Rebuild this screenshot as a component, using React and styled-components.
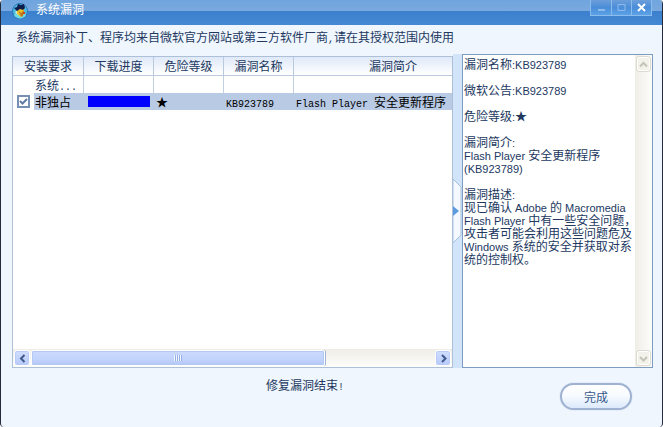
import React, { Component } from 'react';
import styled, { createGlobalStyle } from 'styled-components';

const GlobalStyle = createGlobalStyle`
  * {
    box-sizing: border-box;
  }
  body {
    margin: 0;
    background: #f7fbfe;
    color: #22385f;
    font: 12px/14px "Noto Sans CJK SC", sans-serif;
  }
  button {
    padding: 0;
    font: inherit;
  }
`;

const Window = styled.div`
  display: flex;
  flex-direction: column;
  min-height: 100vh;
  border: solid #232b3d;
  border-width: 0 1px;
  border-radius: 4px;
  background: #eff6fe;
  overflow: hidden;
`;
const TitleBar = styled.header`
  display: flex;
  height: 25px;
  padding: 0 10px;
  background: linear-gradient(#6fa5de 0, #7aa9de 11px, #3b80cd 11px, #4588d4 100%);
`;
const Title = styled.h1`
  flex: auto;
  margin: 0;
  padding: 2px 7px;
  color: white;
  font-size: 12px;
  font-weight: normal;
`;
const WindowButtons = styled.div`
  display: flex;
  height: 16px;
  border: 1px solid #8cbcec;
  border-top: 0;
`;
const WindowButton = styled.button`
  display: flex;
  width: 20px;
  align-items: center;
  justify-content: center;
  border: 0;
  border-left: 1px solid #8cbcec;
  background: linear-gradient(#6c9fdb, #4a8dd8 50%, #5ba2e7);
  color: ${props => (props.$dim ? '#8dbceb' : '#ffffff')};

  &:first-child {
    border-left: 0;
  }
`;
const Intro = styled.p`
  margin: 0;
  padding: 5px 15px 10px;
`;
// smaller western text must not make the chinese lines taller
const Mono = styled.span`
  font-family: "Liberation Mono", monospace;
  font-size: 10px;
  line-height: 0;
`;
const Latin = styled.span`
  font-family: "Liberation Sans", sans-serif;
  font-size: 11px;
  line-height: 0;
`;
const Panels = styled.main`
  display: grid;
  flex: auto;
  grid-template-columns: minmax(0, 1fr) 9px 191px;
  padding: 0 9px 0 11px;
`;
const ListPanel = styled.section`
  display: flex;
  flex-direction: column;
  margin-top: 2px;
  border: 1px solid #aebfd8;
  background: white;
`;
const ListBody = styled.div`
  flex: auto;
  overflow: hidden;
`;
const Table = styled.table`
  width: 480px;
  table-layout: fixed;
  border-collapse: separate;
  border-spacing: 0;
`;
const Col = styled.col`
  width: ${props => props.$width}px;
`;
const Th = styled.th`
  height: 19px;
  padding: 0;
  border: solid #b9c9de;
  border-width: 0 1px 1px 0;
  background: linear-gradient(#dfe9f8, #ffffff);
  font-weight: normal;
`;
const Td = styled.td`
  height: 17px;
  padding: 0 0 0 ${props => props.$indent}px;
  border-right: 1px solid ${props => (props.$selected ? '#b8cae4' : '#c3d0e2')};
  background: ${props => (props.$selected ? '#b8cae4' : '#ffffff')};
  color: ${props => (props.$selected ? '#000000' : '#22385f')};
  line-height: 17px;
  white-space: nowrap;
`;
const CheckLabel = styled.label`
  display: flex;
  align-items: center;
  height: 17px;
`;
const CheckBox = styled.span`
  display: grid;
  width: 21px;
  height: 17px;
  margin-right: 1px;
  place-items: center;
  background: white;

  > * {
    grid-area: 1 / 1;
  }
  svg {
    pointer-events: none;
    visibility: hidden;
  }
  input:checked + svg {
    visibility: visible;
  }
`;
const CheckInput = styled.input`
  appearance: none;
  width: 13px;
  height: 13px;
  margin: 0;
  border: 2px solid #7690b4;
  background: white;
`;
const Progress = styled.div`
  height: 11px;
  margin-right: 3px;
`;
const ProgressFill = styled.div`
  height: 100%;
  background: #0000ff;
`;
const HScroll = styled.div`
  display: flex;
  height: 18px;
  padding: 1px;
  background: linear-gradient(#efede6, #fdfdfa);
`;
const VScroll = styled.div`
  display: flex;
  width: 17px;
  flex-direction: column;
  justify-content: space-between;
  padding: 1px;
  background: linear-gradient(90deg, #efede6, #fdfdfa);
`;
const ScrollButton = styled.button`
  display: flex;
  width: ${props => (props.$dim ? 15 : 16)}px;
  height: 16px;
  align-items: center;
  justify-content: center;
  border: 1px solid ${props => (props.$dim ? '#dddbd0' : '#ffffff')};
  border-radius: 3px;
  background: ${props => (props.$dim ? '#f3f2ea' : 'linear-gradient(#d0defd, #b7cafa)')};
  box-shadow: inset 0 0 0 1px ${props => (props.$dim ? '#ffffff' : '#b8cbf6')};
  color: ${props => (props.$dim ? '#c5c3b8' : '#40598c')};
`;
const ThumbTrack = styled.div`
  flex: auto;
  padding: 0 1px;
`;
const Thumb = styled.div`
  display: flex;
  width: 73%;
  height: 16px;
  align-items: center;
  justify-content: center;
  border: 1px solid white;
  border-radius: 2px;
  background: linear-gradient(#cbdafd, #c2d3fc 60%, #b3c6f5);
  box-shadow: inset 0 0 0 1px #b3c8f2, 1px 0 0 #9eb4d9;
`;
const Splitter = styled.div`
  display: flex;
  align-items: center;
  background: #d1e4f9;
`;
const SplitterButton = styled.button`
  display: flex;
  width: 9px;
  height: 64px;
  border: 0;
  background: none;
`;
const DetailPanel = styled.section`
  display: flex;
  border: 1px solid #7e9cbf;
  background: white;
`;
const DetailText = styled.div`
  flex: 1;
  min-width: 0;
  padding: 2px 0 0 1px;
  line-height: 13px;
`;
// the blank half of a closing comma may reach under the scroll bar
const Paragraph = styled.p`
  margin: 0 -4px 13px 0;
`;
const Footer = styled.footer`
  display: grid;
  min-height: 59px;
  grid-template-columns: 1fr 72px;
  align-items: start;
  padding: 10px 30px 0 49px;
`;
const Status = styled.p`
  margin: 0;
  text-align: center;
`;
const DoneButton = styled.button`
  height: 27px;
  margin-top: 5px;
  border: 2px solid #9fb2d2;
  border-radius: 14px;
  background: linear-gradient(#ffffff, #f7fbff 45%, #dce9fb);
  box-shadow: 0 0 1px #8fa4c8;
  color: #36588a;
`;

const columns = [
  { name: '安装要求', width: 71 },
  { name: '下载进度', width: 70 },
  { name: '危险等级', width: 70 },
  { name: '漏洞名称', width: 70 },
  { name: '漏洞简介', width: 199 },
];

const Logo = () => (
  <svg width="18" height="22" viewBox="0 0 18 22" aria-hidden="true">
    <circle cx="9" cy="11" r="7.5" fill="#4dbbe0" stroke="#2776b8" />
    <path d="M3 15a7 7 0 0 0 12 0l-3-3H6z" fill="#72dce5" />
    <path d="M6 9h7v5l-3 3-4-3z" fill="#ecc52d" />
    <path d="M7 10l3 3 3-3-1 6-2 1z" fill="#b9781f" />
    <path d="M3 8l3-1 1-3 3 1 3-1 1 4-2 2-3-1-3 2z" fill="#101c4c" />
    <path d="M4 12l2-1v3z" fill="#e9f1d0" />
    <path d="M12 12h2v2h-2z" fill="#d8411d" />
  </svg>
);

const arrows = {
  left: 'M6.5 1 3 4.5 6.5 8',
  right: 'M3 1l3.5 3.5L3 8',
  up: 'M1 6.5 4.5 3 8 6.5',
  down: 'M1 3l3.5 3.5L8 3',
};

const Arrow = ({ to }) => (
  <svg width="9" height="9" viewBox="0 0 9 9" aria-hidden="true">
    <path d={arrows[to]} fill="none" stroke="currentColor" strokeWidth="2" />
  </svg>
);

export default class App extends Component {
  constructor(props) {
    super(props);
    this.state = { checked: true, progress: 100 };
    this.handleCheck = this.handleCheck.bind(this);
  }

  handleCheck(event) {
    this.setState({ checked: event.target.checked });
  }

  render() {
    const { checked, progress } = this.state;

    return (
      <Window>
        <GlobalStyle />
        <TitleBar>
          <Logo />
          <Title>系统漏洞</Title>
          <WindowButtons>
            <WindowButton $dim aria-label="最小化">
              <svg width="9" height="9"><path d="M1 6h7v2H1z" fill="currentColor" /></svg>
            </WindowButton>
            <WindowButton $dim aria-label="最大化">
              <svg width="9" height="9"><path d="M1 1.5h7v6H1z" fill="none" stroke="currentColor" /></svg>
            </WindowButton>
            <WindowButton aria-label="关闭">
              <svg width="9" height="9"><path d="M1 1l7 7M8 1 1 8" stroke="currentColor" strokeWidth="2" /></svg>
            </WindowButton>
          </WindowButtons>
        </TitleBar>
        <Intro>
          系统漏洞补丁、程序均来自微软官方网站或第三方软件厂商<Mono>,</Mono>请在其授权范围内使用
        </Intro>
        <Panels>
          <ListPanel>
            <ListBody>
              <Table>
                <colgroup>
                  {columns.map(col => <Col key={col.name} $width={col.width} />)}
                </colgroup>
                <thead>
                  <tr>
                    {columns.map(col => <Th key={col.name} scope="col">{col.name}</Th>)}
                  </tr>
                </thead>
                <tbody>
                  <tr>
                    <Td $indent={22}>系统<Mono>...</Mono></Td>
                    <Td $indent={4} />
                    <Td $indent={2} />
                    <Td $indent={2} />
                    <Td $indent={2} />
                  </tr>
                  <tr>
                    <Td $selected $indent={0}>
                      <CheckLabel>
                        <CheckBox>
                          <CheckInput type="checkbox" checked={checked} onChange={this.handleCheck} />
                          <svg width="9" height="9" viewBox="0 0 9 9">
                            <path d="M1 4l2.5 2.5L8 2" fill="none" stroke="#5f7ba5" strokeWidth="2" />
                          </svg>
                        </CheckBox>
                        非独占
                      </CheckLabel>
                    </Td>
                    <Td $selected $indent={4}>
                      <Progress role="progressbar" aria-label="下载进度" aria-valuenow={progress}>
                        <ProgressFill style={{ width: `${progress}%` }} />
                      </Progress>
                    </Td>
                    <Td $selected $indent={2}>★</Td>
                    <Td $selected $indent={2}><Mono>KB923789</Mono></Td>
                    <Td $selected $indent={2}><Mono>Flash Player </Mono>安全更新程序</Td>
                  </tr>
                </tbody>
              </Table>
            </ListBody>
            <HScroll>
              <ScrollButton aria-label="向左"><Arrow to="left" /></ScrollButton>
              <ThumbTrack>
                <Thumb>
                  <svg width="9" height="6">
                    <path d="M.5 0v6M2.5 0v6M4.5 0v6M6.5 0v6" stroke="#f3f7ff" />
                    <path d="M1.5 0v6M3.5 0v6M5.5 0v6M7.5 0v6" stroke="#95aee3" />
                  </svg>
                </Thumb>
              </ThumbTrack>
              <ScrollButton aria-label="向右"><Arrow to="right" /></ScrollButton>
            </HScroll>
          </ListPanel>
          <Splitter>
            <SplitterButton aria-label="收起">
              <svg width="9" height="64" viewBox="0 0 9 64">
                <path d="M0 0l8 8v48l-8 8z" fill="#f4f9ff" stroke="#a8bfdf" />
                <path d="M0 27l6 5-6 5z" fill="#5d9be0" />
              </svg>
            </SplitterButton>
          </Splitter>
          <DetailPanel>
            <DetailText>
              <Paragraph>漏洞名称<Latin>:KB923789</Latin></Paragraph>
              <Paragraph>微软公告<Latin>:KB923789</Latin></Paragraph>
              <Paragraph>危险等级<Latin>:</Latin>★</Paragraph>
              <Paragraph>
                漏洞简介<Latin>:</Latin><br />
                <Latin>Flash Player </Latin>安全更新程序<br />
                <Latin>(KB923789)</Latin>
              </Paragraph>
              <Paragraph>
                漏洞描述<Latin>:</Latin><br />
                现已确认<Latin> Adobe </Latin>的<Latin> Macromedia Flash Player </Latin>
                中有一些安全问题，攻击者可能会利用这些问题危及<Latin> Windows </Latin>
                系统的安全并获取对系统的控制权。
              </Paragraph>
            </DetailText>
            <VScroll>
              <ScrollButton $dim disabled aria-label="向上"><Arrow to="up" /></ScrollButton>
              <ScrollButton $dim disabled aria-label="向下"><Arrow to="down" /></ScrollButton>
            </VScroll>
          </DetailPanel>
        </Panels>
        <Footer>
          <Status>修复漏洞结束<Mono>!</Mono></Status>
          <DoneButton>完成</DoneButton>
        </Footer>
      </Window>
    );
  }
}
